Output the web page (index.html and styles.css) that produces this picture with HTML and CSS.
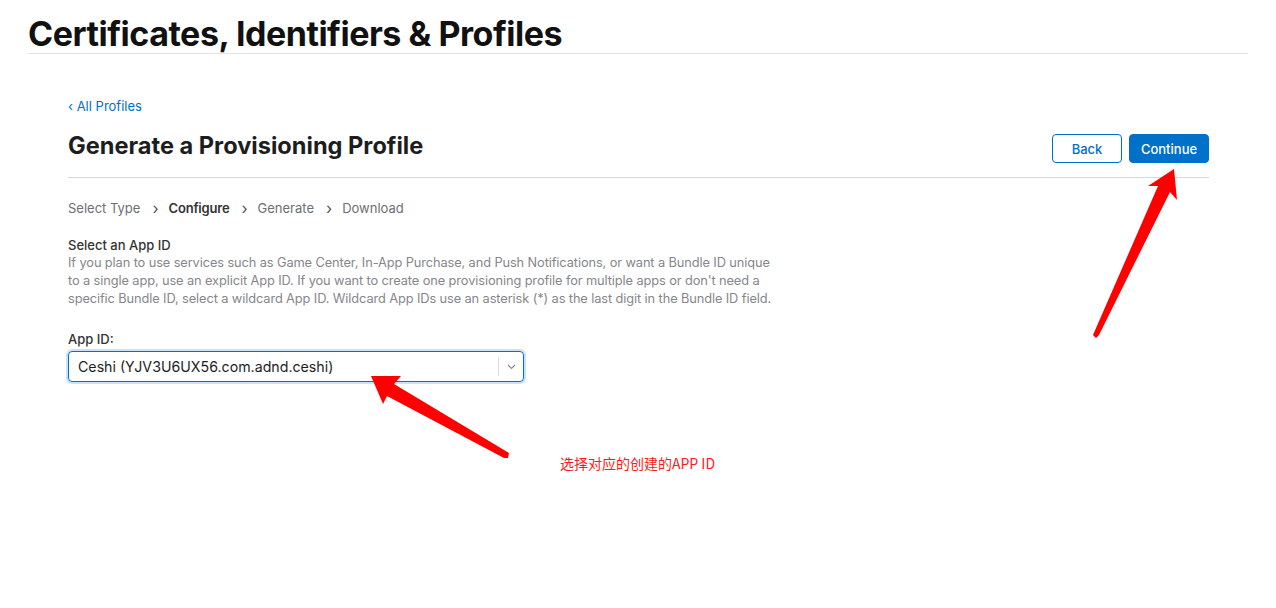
FILE: index.html
```html
<!DOCTYPE html>
<html lang="en">
<head>
<meta charset="utf-8">
<title>Certificates, Identifiers &amp; Profiles</title>
<link rel="stylesheet" href="styles.css">
</head>
<body>
<header class="top">
  <h1 class="top-title">Certificates, Identifiers &amp; Profiles</h1>
</header>
<main class="content">
  <a class="back-link" href="#">&lsaquo; All Profiles</a>
  <div class="title-row">
    <h2 class="page-title">Generate a Provisioning Profile</h2>
    <div class="actions">
      <button class="btn btn-outline">Back</button>
      <button class="btn btn-primary">Continue</button>
    </div>
  </div>
  <nav class="steps">
    <span class="step">Select Type</span>
    <span class="sep">&rsaquo;</span>
    <span class="step step-active">Configure</span>
    <span class="sep">&rsaquo;</span>
    <span class="step">Generate</span>
    <span class="sep">&rsaquo;</span>
    <span class="step">Download</span>
  </nav>
  <section class="section">
    <h3 class="section-title">Select an App ID</h3>
    <p class="section-desc">If you plan to use services such as Game Center, In-App Purchase, and Push Notifications, or want a Bundle ID unique<br>to a single app, use an explicit App ID. If you want to create one provisioning profile for multiple apps or don't need a<br>specific Bundle ID, select a wildcard App ID. Wildcard App IDs use an asterisk (*) as the last digit in the Bundle ID field.</p>
  </section>
  <label class="field-label">App ID:</label>
  <div class="select">
    <span class="select-value">Ceshi (YJV3U6UX56.com.adnd.ceshi)</span>
    <span class="select-divider"></span>
    <svg class="select-chevron" width="9" height="6" viewBox="0 0 9 6"><path d="M1 1l3.5 3.5L8 1" fill="none" stroke="#888" stroke-width="1.1"/></svg>
  </div>
  <p class="note">选择对应的创建的APP ID</p>
</main>
<svg class="arrows" width="1276" height="608" viewBox="0 0 1276 608">
  <polygon fill="#ff0000" points="1174,169 1177,200 1170,192 1099,335 1096,338 1093,335 1158,186 1148,186"/>
  <polygon fill="#ff0000" points="371,376 401,376 394,384 509,453 508,458 504,458 387,396 383,404"/>
</svg>
</body>
</html>
```
FILE: styles.css
```css
* { box-sizing: border-box; }
html, body { margin: 0; padding: 0; background: #fff; }
body {
  position: relative;
  width: 1276px;
  height: 608px;
  overflow: hidden;
  font-family: Inter, "Noto Sans", "Liberation Sans", sans-serif;
  color: #1d1d1f;
}
.top {
  margin-left: 28px;
  width: 1220px;
  padding-top: 14px;
  border-bottom: 1px solid #e3e3e3;
}
.top-title {
  margin: 0;
  font-size: 34px;
  line-height: 39px;
  font-weight: 700;
  letter-spacing: -0.47px;
  color: #111;
}
.content {
  margin-left: 68px;
  width: 1141px;
  padding-top: 43px;
}
.back-link {
  display: block;
  font-size: 13px;
  line-height: 18px;
  color: #0070c9;
  text-decoration: none;
}
.title-row {
  display: flex;
  align-items: flex-start;
  justify-content: space-between;
  margin-top: 18px;
  padding-bottom: 14px;
  border-bottom: 1px solid #d9d9d9;
}
.page-title {
  margin: 0;
  font-size: 23.6px;
  line-height: 26px;
  font-weight: 700;
  color: #1d1d1f;
}
.actions { display: flex; gap: 7px; margin-top: 1px; }
.btn {
  height: 29px;
  border-radius: 4px;
  font-family: inherit;
  font-size: 13px;
  font-weight: 500;
  padding: 0;
  cursor: pointer;
}
.btn-outline {
  width: 70px;
  background: #fff;
  border: 1px solid #0070c9;
  color: #0070c9;
}
.btn-primary {
  width: 80px;
  background: #0070c9;
  border: 1px solid #0070c9;
  color: #fff;
}
.steps {
  display: flex;
  align-items: center;
  margin-top: 21px;
  font-size: 13px;
  line-height: 18px;
  color: #6e6e73;
}
.sep {
  margin: 0 10px 0 12px;
  font-size: 16px;
  color: #555;
}
.step-active { font-weight: 600; color: #333; letter-spacing: -0.2px; }
.section { margin-top: 20px; }
.section-title {
  margin: 0;
  font-size: 13px;
  line-height: 17px;
  font-weight: 500;
  color: #333;
}
.section-desc {
  margin: 0;
  font-size: 12.8px;
  line-height: 18px;
  letter-spacing: -0.1px;
  color: #86868b;
  white-space: nowrap;
}
.field-label {
  display: block;
  margin-top: 22px;
  font-size: 13px;
  line-height: 18px;
  font-weight: 500;
  color: #333;
}
.select {
  display: flex;
  align-items: center;
  width: 456px;
  height: 31px;
  margin-top: 3px;
  padding-left: 9px;
  border: 1px solid #0070c9;
  border-radius: 4px;
  box-shadow: 0 0 0 2px rgba(0, 125, 250, 0.22);
}
.select-value {
  flex: 1;
  font-size: 14.2px;
  color: #1d1d1f;
}
.select-divider {
  width: 1px;
  height: 18px;
  background: #ddd;
}
.select-chevron { margin: 0 7px 0 8px; }
.note {
  margin: 72px 0 0 492px;
  font-size: 14px;
  line-height: 18px;
  color: #ff1a1a;
  font-family: "Noto Sans CJK SC", "Noto Sans", sans-serif;
}
.arrows {
  position: absolute;
  left: 0;
  top: 0;
  pointer-events: none;
}
```
